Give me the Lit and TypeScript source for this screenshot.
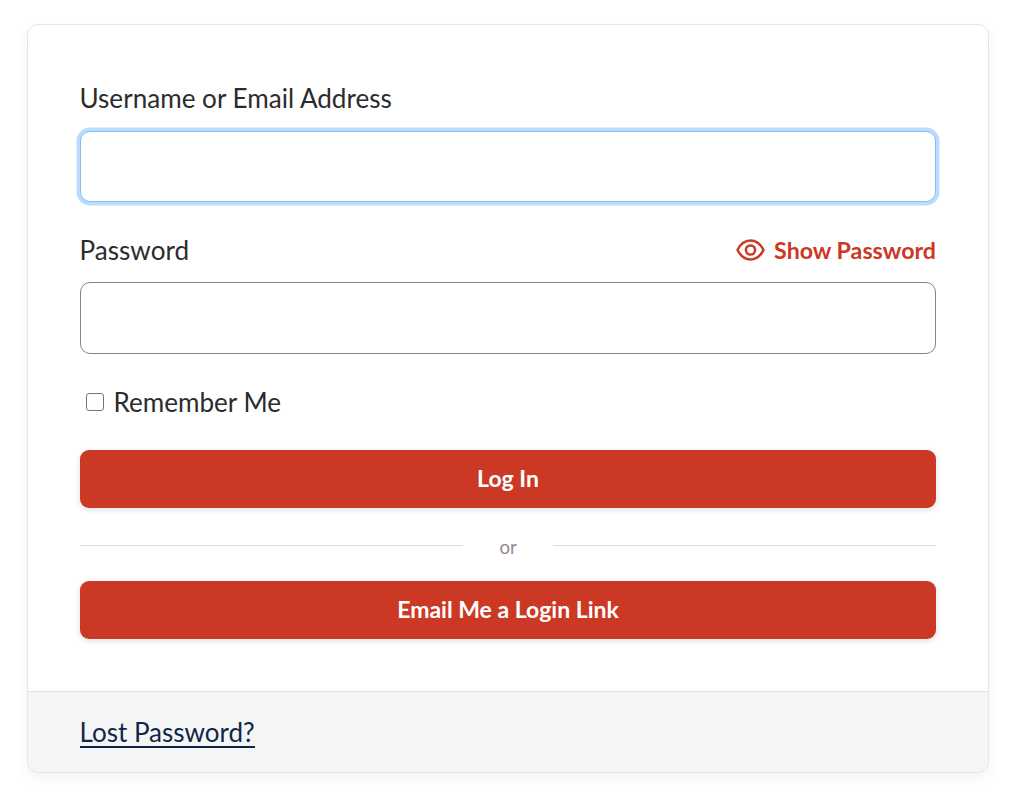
import { LitElement, html, css } from "lit";
import { customElement } from "lit/decorators.js";

@customElement("app-root")
export class AppRoot extends LitElement {
  static styles = css`
    :host { display: block; font-family: Lato, "Liberation Sans", sans-serif; color: #2c2c2c; background: #fff; min-height: 807px; box-sizing: border-box; padding: 24px 35px 35px 27px; }
    .card { background: #fff; border: 1px solid #e6e6e6; border-radius: 11px; overflow: hidden; box-shadow: 0 5px 14px rgba(0,0,0,.05); }
    .body { padding: 55px 52px 52px; display: flex; flex-direction: column; }
    .label-row { display: flex; justify-content: space-between; align-items: center; height: 36px; }
    label { font-size: 26.1px; line-height: 36px; margin-left: -0.5px; }
    .field { display: block; box-sizing: border-box; width: 100%; height: 71.5px; margin-top: 14px; border: 1.5px solid #858585; border-radius: 10px; background: #fff; outline: none; padding: 0 16px; }
    .field.focus { height: 71px; margin-top: 15px; border-color: #80bdf7; box-shadow: 0 0 0 3.5px #bbdcfd; }
    .pw { margin-top: 30px; }
    .show { display: flex; align-items: center; gap: 9px; color: #cb3925; font-size: 23.2px; font-weight: 700; }
    .show svg { width: 29px; height: 22px; display: block; }
    .remember { display: flex; align-items: center; margin-top: 30.5px; height: 36px; padding-left: 6px; gap: 10px; }
    .remember input { appearance: none; box-sizing: border-box; width: 18px; height: 18px; margin: 0; border: 1.5px solid #767676; border-radius: 3px; background: #fff; }
    button { display: block; width: 100%; height: 57.5px; border: 0; border-radius: 9px; background: #cb3925; color: #fff; font: 700 23px Lato, "Liberation Sans", sans-serif; box-shadow: 0 2px 6px rgba(0,0,0,.12); padding: 0 0 1px; }
    .login { margin-top: 30px; }
    .or { display: flex; align-items: flex-start; height: 73.5px; color: #8c8c8c; font-size: 18.5px; gap: 36px; }
    .or span { line-height: 24px; margin-top: 27px; }
    .or i { flex: 1; height: 1px; margin-top: 37px; background: #dedede; }
    .foot { background: #f5f5f5; border-top: 1px solid #e3e3e3; height: 81px; padding: 2px 52px 0; display: flex; align-items: center; box-sizing: border-box; }
    .foot a { font-size: 26px; color: #0e2748; text-decoration: none; border-bottom: 2.5px solid #0e2748; line-height: 28px; margin-left: -0.5px; }
  `;

  render() {
    return html`
      <div class="card">
        <div class="body">
          <div class="label-row"><label>Username or Email Address</label></div>
          <input class="field focus" type="text" />
          <div class="label-row pw">
            <label>Password</label>
            <span class="show">
              <svg viewBox="0 0 29 22" fill="none" stroke="#cb3925" stroke-width="2.5" stroke-linejoin="round">
                <path d="M1.5 11C4.6 4.8 9.2 1.6 14.5 1.6S24.4 4.8 27.5 11C24.4 17.2 19.8 20.4 14.5 20.4S4.6 17.2 1.5 11Z" />
                <circle cx="14.5" cy="11" r="4.6" />
              </svg>
              Show Password
            </span>
          </div>
          <input class="field" type="password" />
          <div class="remember"><input type="checkbox" /><label>Remember Me</label></div>
          <button class="login">Log In</button>
          <div class="or"><i></i><span>or</span><i></i></div>
          <button>Email Me a Login Link</button>
        </div>
        <div class="foot"><a href="#">Lost Password?</a></div>
      </div>
    `;
  }
}
